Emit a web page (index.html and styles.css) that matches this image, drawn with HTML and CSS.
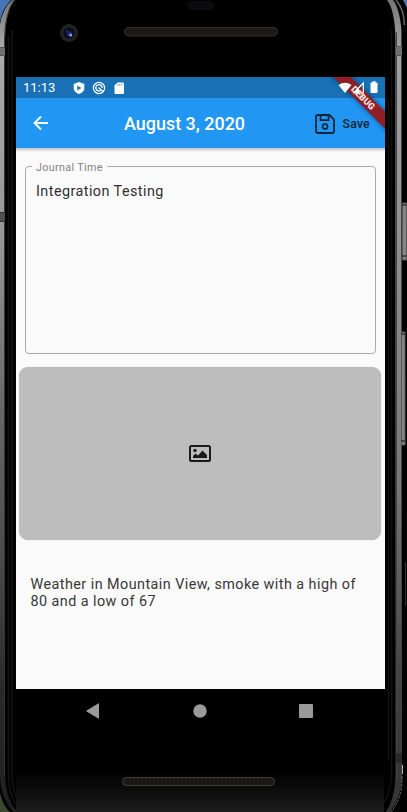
FILE: index.html
```html
<!DOCTYPE html>
<html lang="en">
<head>
<meta charset="utf-8">
<title>Journal entry</title>
<link rel="stylesheet" href="styles.css">
</head>
<body>
<div class="device">
  <svg class="shell" width="407" height="812" viewBox="0 0 407 812" aria-hidden="true">
    <defs>
      <linearGradient id="metal" x1="0" y1="0" x2="0" y2="812" gradientUnits="userSpaceOnUse">
        <stop offset="0" stop-color="#777"/><stop offset=".06" stop-color="#aaa"/><stop offset=".3" stop-color="#959595"/>
        <stop offset=".5" stop-color="#686868"/><stop offset=".7" stop-color="#484848"/><stop offset=".85" stop-color="#292929"/><stop offset="1" stop-color="#202020"/>
      </linearGradient>
      <linearGradient id="metalRight" x1="0" y1="0" x2="0" y2="812" gradientUnits="userSpaceOnUse">
        <stop offset="0" stop-color="#777"/><stop offset=".06" stop-color="#a2a2a2"/><stop offset=".4" stop-color="#888"/><stop offset=".6" stop-color="#777"/><stop offset=".85" stop-color="#404040"/><stop offset="1" stop-color="#333"/>
      </linearGradient>
      <linearGradient id="chin" x1="0" y1="0" x2="0" y2="1"><stop offset="0" stop-color="#000"/><stop offset="1" stop-color="#1c1c1c"/></linearGradient>
      <pattern id="mesh" width="4" height="6" patternUnits="userSpaceOnUse"><rect width="4" height="6" fill="#181715"/><path d="M1 0l1 3-1 3" stroke="#26211d" fill="none"/></pattern>
    </defs>
    <rect width="407" height="812" fill="#000"/>
    <path d="M0 0H11Q2 9 0 22Z" fill="#4676b5"/>
    <path d="M403 0h4v8z" fill="#4676b5"/>
    <path d="M0 793Q3 806 10 812H0Z" fill="#3a4930"/>
    <path d="M0 24Q3 8 12 0h3Q5 12 5 40V776Q5 797 17 812h-4Q0 796 0 776Z" fill="url(#metal)"/>
    <path d="M4.500 776V40Q4.500 14 14 0" fill="none" stroke="#353535"/>
    <path d="M12 30V776Q12 795 24 812M8.500 36V776Q8.500 795 20 812" fill="none" stroke="#141414" stroke-width="1.500"/>
    <path d="M387 0Q395 10 395.500 40V776Q395 798 386 812h4Q402 796 402 776V40Q401 10 393 0Z" fill="url(#metalRight)"/>
    <path d="M396.500 32V780M401.500 32V780" fill="none" stroke="#444" stroke-width="1"/>
    <path d="M396 0Q404 9 404.500 25" fill="none" stroke="#666" stroke-width="1.500"/>
    <path d="M391.500 30V776Q391 795 378 812M388.500 100V760" fill="none" stroke="#111" stroke-width="1.500"/>
    <path d="M0 47h5v8H0zM396 46h6v9h-6z" fill="#707070"/>
    <path d="M0 47.500h5M0 55.500h5M396 46.500h6M396 55.500h6" stroke="#555"/>
    <path d="M0 212h5v10H0z" fill="#505050"/>
    <path d="M0 212.500h5M0 221.500h5" stroke="#333"/>
    <path d="M396 753h6v10h-6z" fill="#292929"/>
    <path d="M402.500 203h4V260h-4zM401.500 332h3.500V445h-3.500z" fill="#858585" stroke="#555"/>
    <path d="M402 205h4M402 256h4M401 334h4M401 441h4" stroke="#333" stroke-width="1.500"/>
    <path d="M405.500 562v44" stroke="#333"/><path d="M402.500 765v9" stroke="#aaa"/>
    <path d="M402 776Q403 797 391 812" fill="none" stroke="#666" stroke-dasharray="3 1"/>
    <rect x="16" y="770" width="368" height="42" fill="url(#chin)"/>
    <rect x="187" y="1" width="27" height="9" rx="4.500" fill="#090b10"/>
    <circle cx="69" cy="33" r="9" fill="#232222"/><circle cx="69" cy="33" r="5.500" fill="#0b0c19"/>
    <circle cx="69.500" cy="34" r="2.800" fill="#1d2563"/><circle cx="70.700" cy="35" r="1.500" fill="#8f9cf5"/><circle cx="67" cy="31" r=".7" fill="#4964db"/>
    <rect x="124.500" y="27.500" width="153" height="8.500" rx="4.200" fill="url(#mesh)" stroke="#343331"/>
    <rect x="122.500" y="777.500" width="152" height="8" rx="4" fill="url(#mesh)" stroke="#403e3b"/>
  </svg>

  <main class="screen">
    <header class="top">
      <div class="status">
        <span class="clock">11:13</span>
        <svg class="notice" width="54" height="14" viewBox="0 0 54 14" aria-hidden="true">
          <path d="M7 1L12.300 3V7Q12.300 11 7 13Q1.700 11 1.700 7V3Z" fill="#fff"/><path d="M5.300 4.400L9.400 7l-4.100 2.600z" fill="#1a70b5"/>
          <circle cx="27" cy="7" r="5.600" fill="none" stroke="#fff" stroke-width="1.200"/>
          <path d="M28.500 9.600A3.200 3.200 0 1 1 30.200 7M26.500 6.500l5 4.500" fill="none" stroke="#fff" stroke-width="1.300"/>
          <path d="M45.500 1.500H51q1 0 1 1V12q0 1-1 1h-7.500q-1 0-1-1V4.500z" fill="#fff"/><path d="M45.700 3v1.600M47.700 3v1.600M49.700 3v1.600" stroke="#1a70b5" stroke-width=".7"/>
        </svg>
      </div>
      <div class="appbar">
        <svg class="back" width="16" height="16" viewBox="0 0 16 16" aria-label="Back"><path d="M15 8H2M8 1.500L1.500 8L8 14.500" fill="none" stroke="#fff" stroke-width="1.800"/></svg>
        <h1>August 3, 2020</h1>
        <button class="save">
          <svg width="20" height="20" viewBox="0 0 20 20" aria-hidden="true"><path d="M3 1H14.500L19 5.500V17q0 2-2 2H3q-2 0-2-2V3q0-2 2-2Z" fill="none" stroke="#142636" stroke-width="1.800"/><path d="M5.500 1.500V6.200h8V1.500" fill="none" stroke="#142636" stroke-width="1.700"/><circle cx="10" cy="12.500" r="2.500" fill="none" stroke="#142636" stroke-width="1.700"/></svg>
          <span>Save</span>
        </button>
      </div>
      <div class="ribbon">DEBUG</div>
      <svg class="signals" width="44" height="16" viewBox="0 0 44 16" aria-hidden="true">
        <path d="M.5 5Q7 .5 13.500 5L7 13Z" fill="#fff"/>
        <path d="M25.300 3v10h-9.500z" fill="none" stroke="#fff" stroke-width="1.200"/><path d="M16 13l5-5v5z" fill="#fff"/>
        <path d="M34.500 2.500V1.200h3v1.300h1.200q.8 0 .8.800V12q0 1-1 1h-5q-1 0-1-1V3.300q0-.8.800-.8z" fill="#fff"/>
      </svg>
    </header>

    <fieldset class="journal">
      <legend>Journal Time</legend>
      <p>Integration Testing</p>
    </fieldset>

    <div class="photo">
      <svg width="22" height="17" viewBox="0 0 22 17" aria-label="Add image"><rect x="1" y="1" width="20" height="15" rx="1.500" fill="none" stroke="#1b1b1b" stroke-width="2"/><circle cx="6" cy="5.500" r="1.700" fill="#1b1b1b"/><path d="M4 13V11l2.500-2.500L9 10.500l4.500-5L18 10v3z" fill="#1b1b1b"/></svg>
    </div>

    <p class="weather">Weather in Mountain View, smoke with a high of<br>80 and a low of 67</p>
  </main>

  <nav class="keys">
    <svg width="14" height="16" viewBox="0 0 14 16" aria-label="Back"><path d="M12.500 .8V15.200L.7 8Z" fill="#9b9b9b" stroke="#9b9b9b" stroke-linejoin="round"/></svg>
    <svg width="14" height="14" viewBox="0 0 14 14" aria-label="Home"><circle cx="7" cy="7" r="6.700" fill="#9b9b9b"/></svg>
    <svg width="14" height="14" viewBox="0 0 14 14" aria-label="Recents"><rect width="14" height="14" rx="1" fill="#9b9b9b"/></svg>
  </nav>
</div>
</body>
</html>
```
FILE: styles.css
```css
* { box-sizing: border-box; }
body { margin: 0; background: #000; font-family: Roboto, "Liberation Sans", sans-serif; }
svg { display: block; flex: none; }
p, h1 { margin: 0; }

.device { position: relative; width: 407px; height: 812px; padding: 77px 22px 0 16px; overflow: hidden; }
.shell { position: absolute; left: 0; top: 0; }
.screen { position: relative; height: 612px; background: #fafafa; display: flex; flex-direction: column; }
.screen::before { content: ""; position: absolute; top: 71px; left: 0; right: 0; height: 4px; background: linear-gradient(#c2c2c2, #fafafa); }

.top { position: relative; height: 71px; flex: none; overflow: hidden; background: #2196f3; }
.status { height: 21px; padding-left: 7px; background: #1a70b5; display: flex; align-items: center; color: #fff; }
.clock { width: 49px; font-size: 13px; line-height: 21px; letter-spacing: 0; }
.appbar { height: 50px; padding: 0 15px 0 17px; display: flex; align-items: center; }
.back { margin-right: 75px; }
h1 { width: 175px; font-size: 17.95px; line-height: 24px; font-weight: 500; color: #fff; white-space: nowrap; margin-top: 1px; }
.save { margin: 1px 0 0 15.500px; padding: 0; border: 0; background: none; display: flex; align-items: center; gap: 8px; font: 500 12.3px/18px Roboto, sans-serif; letter-spacing: .2px; color: #142636; }

.ribbon { position: absolute; top: 15px; right: -28px; width: 100px; height: 12px; transform: rotate(45deg); background: #921d24; box-shadow: 0 0 5px rgba(0, 0, 0, .5); color: #f2e4e4; font-size: 9.2px; line-height: 12px; font-weight: 900; text-align: center; }
.signals { position: absolute; left: 322px; top: 3px; }

.journal { position: relative; margin: 11px 9px 0; height: 195px; padding: 0 10px; border: 1px solid #aaa; border-radius: 4px; min-width: 0; flex: none; }
legend { margin-left: -4px; padding: 2px 4px 0; font-size: 10.77px; line-height: 13px; letter-spacing: .35px; color: #858585; }
.journal p { padding-top: 9px; font-size: 14.36px; line-height: 17px; letter-spacing: .45px; color: #303030; }

.photo { margin: 13px 4px 0 3px; height: 173px; flex: none; display: grid; place-items: center; padding-bottom: 1px; border-radius: 9px; background: #bdbdbd; box-shadow: 0 0 1px #aaa; }
.weather { margin: 36px 14px 0 14.500px; font-size: 14.36px; line-height: 17px; letter-spacing: .45px; color: #383838; white-space: nowrap; }

.keys { position: relative; height: 43px; padding: 0 72px 0 70px; display: flex; align-items: center; justify-content: space-between; }
```
